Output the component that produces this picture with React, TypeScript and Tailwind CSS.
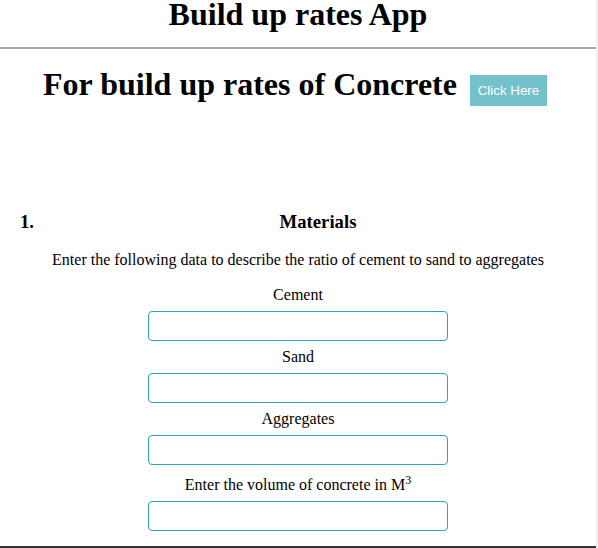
import React from "react";

const serif = { fontFamily: '"Liberation Serif", "Times New Roman", serif' };

function Field({ label }: { label: React.ReactNode }) {
  return (
    <>
      <div className="mt-[6px] text-center text-[16px] leading-[20px] text-black">{label}</div>
      <div className="mt-[6px] flex justify-center">
        <input
          type="text"
          className="h-[30px] w-[300px] rounded-[4px] border border-[#2fa4b4] bg-white px-2 outline-none"
        />
      </div>
    </>
  );
}

export default function App() {
  return (
    <div className="flex h-[548px] w-[598px] overflow-hidden bg-white" style={serif}>
      <div className="flex w-[596px] flex-col">
        <h1 className="m-0 text-center text-[32px] font-bold leading-[28px] text-black">
          Build up rates App
        </h1>
        <div className="mt-[19px] h-[2px] w-full bg-[#a9a9a9]" />
        <div className="mt-[21px] flex h-[36px] items-start justify-center gap-[13px] pr-[6px]">
          <h2 className="m-0 text-[32px] font-bold leading-[28px] text-black">
            For build up rates of Concrete
          </h2>
          <button
            className="mt-[5px] h-[31px] w-[77px] bg-[#74c1cc] text-[13.33px] text-white"
            style={{ fontFamily: '"Liberation Sans", Arial, sans-serif' }}
          >
            Click Here
          </button>
        </div>
        <div className="mt-[105px] flex text-[18.72px] font-bold leading-[22px] text-black">
          <div className="w-[40px] pl-[20px]">1.</div>
          <div className="flex-1 text-center">Materials</div>
        </div>
        <div className="mt-[17px] text-center text-[16px] leading-[20px] text-black">
          Enter the following data to describe the ratio of cement to sand to aggregates
        </div>
        <div className="mt-[9px]" />
        <Field label="Cement" />
        <Field label="Sand" />
        <Field label="Aggregates" />
        <div className="mt-[4px]" />
        <Field
          label={
            <>
              Enter the volume of concrete in M<sup>3</sup>
            </>
          }
        />
        <div className="mt-[15px] h-[2px] w-full bg-[#333333]" />
      </div>
      <div className="h-full w-[2px] bg-[#efefef]" />
    </div>
  );
}
